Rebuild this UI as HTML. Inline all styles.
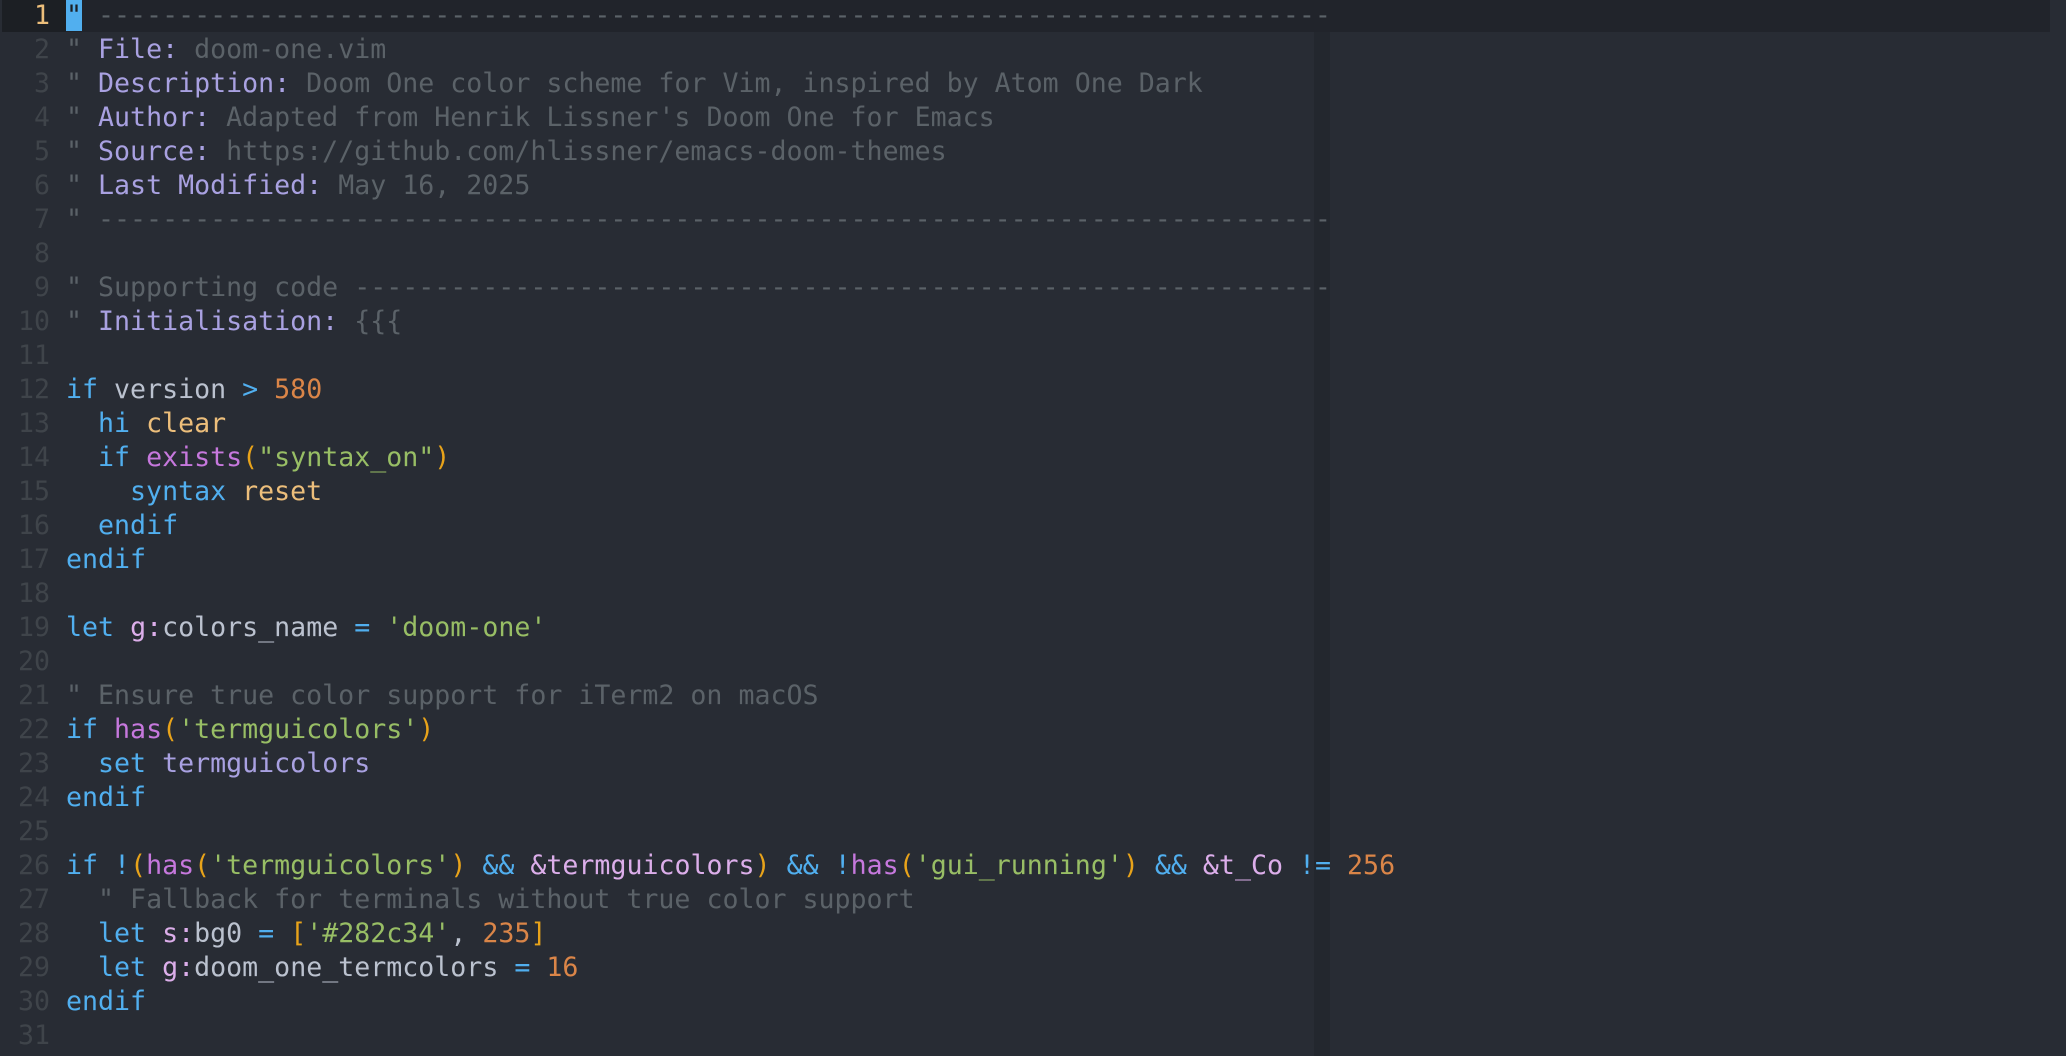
<!DOCTYPE html>
<html><head><meta charset="utf-8"><style>
html,body{margin:0;padding:0;background:#282c34;width:2066px;height:1056px;overflow:hidden}
.wrap{position:relative;width:2066px;height:1056px}
.cc{position:absolute;left:1314px;top:32px;width:16px;height:1024px;background:#23272e}
.cur{position:absolute;left:2px;top:0;width:2048px;height:32px;background:#21242b}
.curg{position:absolute;left:2px;top:0;width:64px;height:32px;background:#1c1f24}
.ln{position:absolute;left:0;width:50px;text-align:right;color:#3f444a;font:26.6px/34px "DejaVu Sans Mono","Liberation Mono",monospace;white-space:pre}
.cd{position:absolute;left:66px;color:#bbc2cf;font:26.6px/34px "DejaVu Sans Mono","Liberation Mono",monospace;white-space:pre}
.c{color:#5B6268}.l{color:#a9a1e1}.k{color:#51afef}.s{color:#98be65}.n{color:#da8548}
.y{color:#ECBE7B}.m{color:#c678dd}.p{color:#dcaeea}.b{color:#e8a31a}
.cursor{background:#51afef;color:#1c1f24}
</style></head><body><div class="wrap">
<div class="cc"></div><div class="cur"></div><div class="curg"></div>
<div class="ln" style="top:-1px;color:#ECBE7B">1</div><div class="cd" style="top:-1px"><span class="cursor">"</span><span class="c"> -----------------------------------------------------------------------------</span></div>
<div class="ln" style="top:33px">2</div><div class="cd" style="top:33px"><span class="c">" </span><span class="l">File:</span><span class="c"> doom-one.vim</span></div>
<div class="ln" style="top:67px">3</div><div class="cd" style="top:67px"><span class="c">" </span><span class="l">Description:</span><span class="c"> Doom One color scheme for Vim, inspired by Atom One Dark</span></div>
<div class="ln" style="top:101px">4</div><div class="cd" style="top:101px"><span class="c">" </span><span class="l">Author:</span><span class="c"> Adapted from Henrik Lissner's Doom One for Emacs</span></div>
<div class="ln" style="top:135px">5</div><div class="cd" style="top:135px"><span class="c">" </span><span class="l">Source:</span><span class="c"> https://github.com/hlissner/emacs-doom-themes</span></div>
<div class="ln" style="top:169px">6</div><div class="cd" style="top:169px"><span class="c">" </span><span class="l">Last Modified:</span><span class="c"> May 16, 2025</span></div>
<div class="ln" style="top:203px">7</div><div class="cd" style="top:203px"><span class="c">" -----------------------------------------------------------------------------</span></div>
<div class="ln" style="top:237px">8</div>
<div class="ln" style="top:271px">9</div><div class="cd" style="top:271px"><span class="c">" Supporting code -------------------------------------------------------------</span></div>
<div class="ln" style="top:305px">10</div><div class="cd" style="top:305px"><span class="c">" </span><span class="l">Initialisation:</span><span class="c"> {{{</span></div>
<div class="ln" style="top:339px">11</div>
<div class="ln" style="top:373px">12</div><div class="cd" style="top:373px"><span class="k">if</span> version <span class="k">&gt;</span> <span class="n">580</span></div>
<div class="ln" style="top:407px">13</div><div class="cd" style="top:407px">  <span class="k">hi</span> <span class="y">clear</span></div>
<div class="ln" style="top:441px">14</div><div class="cd" style="top:441px">  <span class="k">if</span> <span class="m">exists</span><span class="b">(</span><span class="s">"syntax_on"</span><span class="b">)</span></div>
<div class="ln" style="top:475px">15</div><div class="cd" style="top:475px">    <span class="k">syntax</span> <span class="y">reset</span></div>
<div class="ln" style="top:509px">16</div><div class="cd" style="top:509px">  <span class="k">endif</span></div>
<div class="ln" style="top:543px">17</div><div class="cd" style="top:543px"><span class="k">endif</span></div>
<div class="ln" style="top:577px">18</div>
<div class="ln" style="top:611px">19</div><div class="cd" style="top:611px"><span class="k">let</span> <span class="p">g:</span>colors_name <span class="k">=</span> <span class="s">'doom-one'</span></div>
<div class="ln" style="top:645px">20</div>
<div class="ln" style="top:679px">21</div><div class="cd" style="top:679px"><span class="c">" Ensure true color support for iTerm2 on macOS</span></div>
<div class="ln" style="top:713px">22</div><div class="cd" style="top:713px"><span class="k">if</span> <span class="m">has</span><span class="b">(</span><span class="s">'termguicolors'</span><span class="b">)</span></div>
<div class="ln" style="top:747px">23</div><div class="cd" style="top:747px">  <span class="k">set</span> <span class="l">termguicolors</span></div>
<div class="ln" style="top:781px">24</div><div class="cd" style="top:781px"><span class="k">endif</span></div>
<div class="ln" style="top:815px">25</div>
<div class="ln" style="top:849px">26</div><div class="cd" style="top:849px"><span class="k">if</span> <span class="k">!</span><span class="b">(</span><span class="m">has</span><span class="b">(</span><span class="s">'termguicolors'</span><span class="b">)</span> <span class="k">&amp;&amp;</span> <span class="p">&amp;termguicolors</span><span class="b">)</span> <span class="k">&amp;&amp;</span> <span class="k">!</span><span class="m">has</span><span class="b">(</span><span class="s">'gui_running'</span><span class="b">)</span> <span class="k">&amp;&amp;</span> <span class="p">&amp;t_Co</span> <span class="k">!=</span> <span class="n">256</span></div>
<div class="ln" style="top:883px">27</div><div class="cd" style="top:883px">  <span class="c">" Fallback for terminals without true color support</span></div>
<div class="ln" style="top:917px">28</div><div class="cd" style="top:917px">  <span class="k">let</span> <span class="p">s:</span>bg0 <span class="k">=</span> <span class="b">[</span><span class="s">'#282c34'</span>, <span class="n">235</span><span class="b">]</span></div>
<div class="ln" style="top:951px">29</div><div class="cd" style="top:951px">  <span class="k">let</span> <span class="p">g:</span>doom_one_termcolors <span class="k">=</span> <span class="n">16</span></div>
<div class="ln" style="top:985px">30</div><div class="cd" style="top:985px"><span class="k">endif</span></div>
<div class="ln" style="top:1019px">31</div>
</div></body></html>
